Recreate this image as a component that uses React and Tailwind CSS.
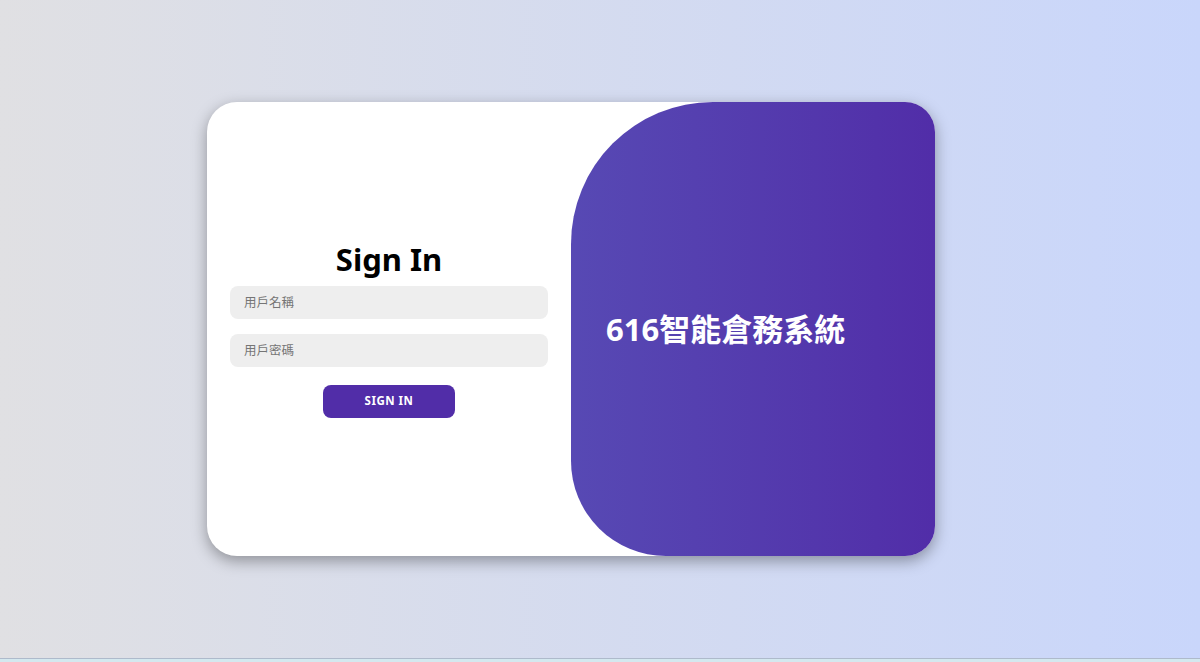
export default function App() {
  return (
    <div
      className="flex h-[662px] w-full flex-col bg-gradient-to-r from-[#e0e0e3] to-[#c9d6fb]"
      style={{ fontFamily: '"Noto Sans", "Noto Sans CJK TC", sans-serif' }}
    >
      <div className="flex flex-1 items-center pl-[207px]">
        <div className="flex h-[454px] w-[728px] overflow-hidden rounded-[30px] bg-white shadow-[0_5px_15px_rgba(0,0,0,0.35)]">
          {/* sign-in form */}
          <form className="flex w-1/2 flex-col items-center justify-center px-[23px]">
            <h1 className="mb-[2px] text-[31px] font-bold leading-[36px] text-black">Sign In</h1>
            <input
              type="text"
              placeholder="用戶名稱"
              className="my-[7.5px] h-[33px] w-full rounded-[8px] bg-[#eeeeee] px-[14px] text-[12.5px] outline-none placeholder:text-[#757575]"
            />
            <input
              type="password"
              placeholder="用戶密碼"
              className="my-[7.5px] h-[33px] w-full rounded-[8px] bg-[#eeeeee] px-[14px] text-[12.5px] outline-none placeholder:text-[#757575]"
            />
            <button
              type="button"
              className="mt-[10px] h-[33px] w-[132px] rounded-[8px] bg-[#512da8] text-[11.5px] font-bold uppercase tracking-[0.5px] text-white"
            >
              Sign In
            </button>
          </form>

          {/* welcome panel */}
          <div className="flex w-1/2 items-center rounded-bl-[95px] rounded-tl-[142px] bg-gradient-to-r from-[#5749b4] to-[#512da8] pl-[35px]">
            <h1 className="text-[31px] font-bold leading-none text-white">616智能倉務系統</h1>
          </div>
        </div>
      </div>
      <div className="h-[4px] border-t border-[#aebacb] bg-[#d4e8ef]" />
    </div>
  );
}
